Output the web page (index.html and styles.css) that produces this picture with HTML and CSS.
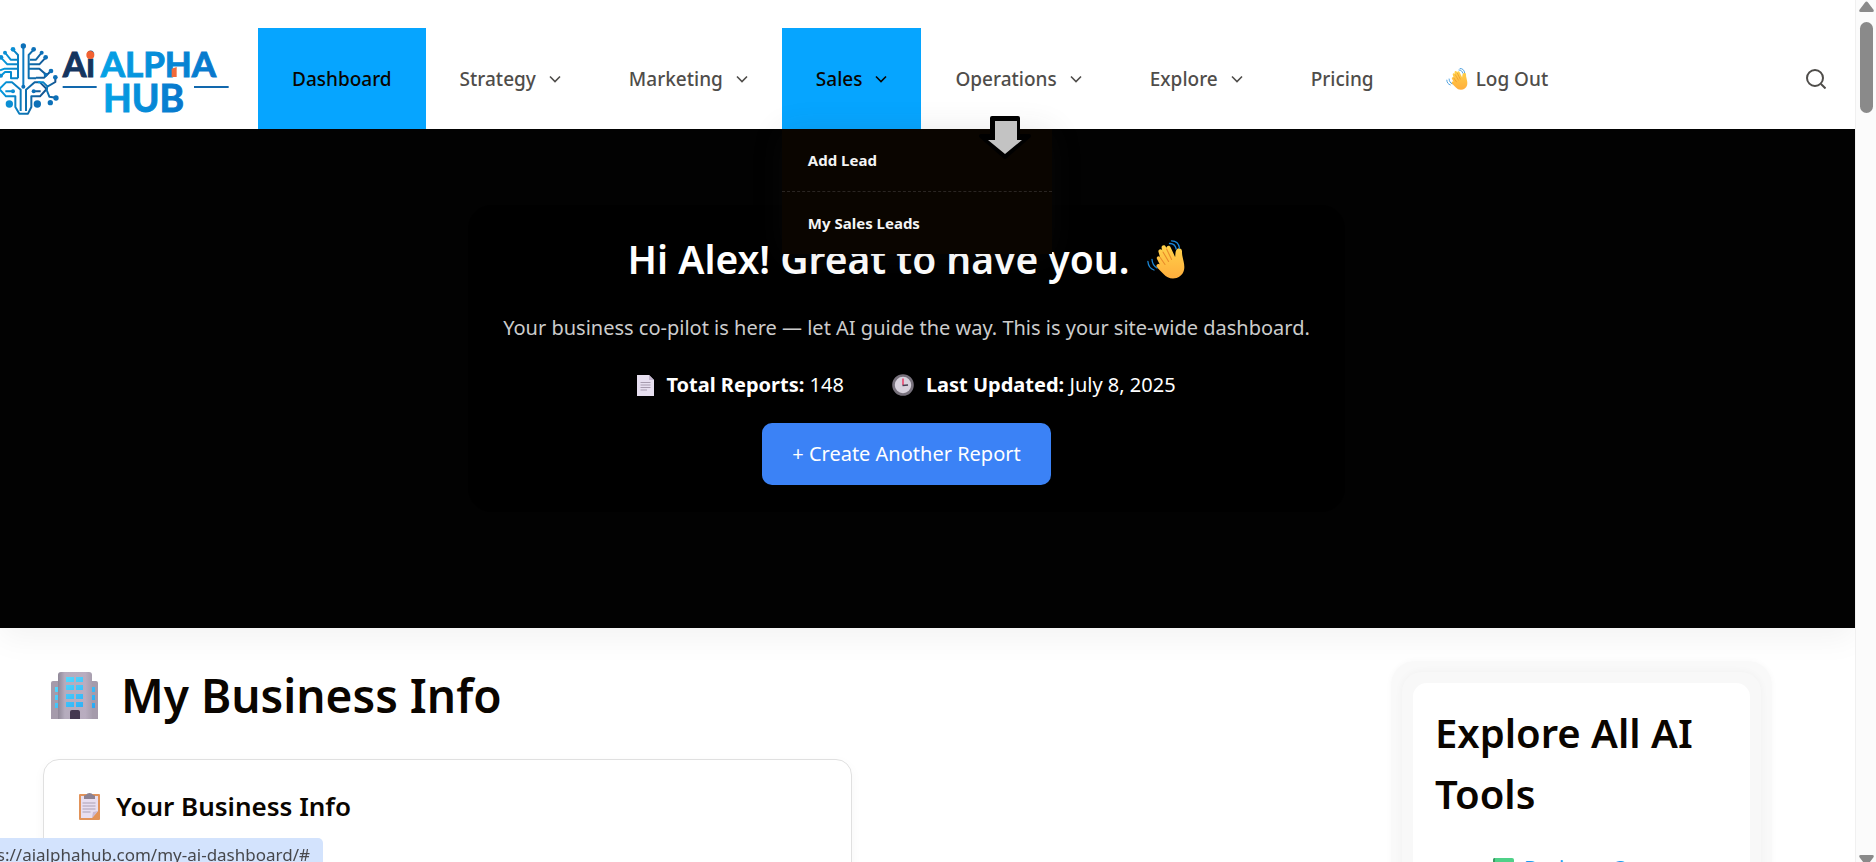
FILE: index.html
```
<!DOCTYPE html>
<html lang="en">
<head>
<meta charset="utf-8">
<meta name="viewport" content="width=device-width, initial-scale=1">
<title>Ai Alpha Hub – My AI Dashboard</title>
<link rel="stylesheet" href="styles.css">
</head>
<body>
<svg class="defs" aria-hidden="true">
  <defs>
    <linearGradient id="skin" x1="0" y1="0" x2="0" y2="1"><stop offset="0" stop-color="#ffd24a"/><stop offset="1" stop-color="#ffae3d"/></linearGradient>
    <linearGradient id="wall" x1="0" y1="0" x2="1" y2="0"><stop offset="0" stop-color="#8f8797"/><stop offset=".2" stop-color="#b5acbd"/><stop offset=".8" stop-color="#b9adc0"/><stop offset="1" stop-color="#a79eae"/></linearGradient>
    <linearGradient id="glass" x1="0" y1="0" x2="1" y2="1"><stop offset="0" stop-color="#5be0ff"/><stop offset="1" stop-color="#26a8f5"/></linearGradient>
    <linearGradient id="brain" x1="0" y1="0" x2="1" y2="0"><stop offset="0" stop-color="#049be0"/><stop offset="1" stop-color="#14508c"/></linearGradient>
    <linearGradient id="brand" x1="0" y1="0" x2="1" y2="0"><stop offset="0" stop-color="#05a3e6"/><stop offset="1" stop-color="#0876cb"/></linearGradient>
    <symbol id="chevron" viewBox="0 0 12 12"><path d="M1 3.500 6 8.500l5-5" fill="none" stroke="currentColor" stroke-width="1.600"/></symbol>
    <symbol id="wave" viewBox="0 0 38 39">
      <path d="M10 19c-1-2 1.500-3.700 3-2L11.500 12c-.8-2.600 2.600-4 3.800-1.600L14.600 8c-.5-2.700 3-3.800 4.200-1.300l.6 1.100c.4-2.600 3.500-2.700 4.300-.4l4.400 9.500c.5-3 .1-5.400 1.600-7.300 1.800-2.200 4.700-1.200 5.200 1.100.3 1.500 0 2.600.4 4.800C36.600 22 38 25.500 37 30c-1.300 5.500-6 8.500-11 8.500-4 0-6.700-1.600-9.500-4.500l-6.200-6.200c-2.200-2.200.2-5 2.500-3.300z" fill="url(#skin)"/>
      <path d="m13.200 17.500 4.800 7M16 12l5.600 9.500M19.600 9l5 10.500" fill="none" stroke="#e98b2b" stroke-width="1.100" stroke-linecap="round"/>
      <path d="M22.500 3.500c3.500-.2 6 2.200 6.700 5.500M24.500.8c4.500 0 7.500 3 8 7.500M5 19.500c.2 4 2 6.700 5 8.500M.9 21.500C1.300 26 3.200 28.800 7 30" fill="none" stroke="#1b87d6" stroke-width="1.300" stroke-linecap="round"/>
    </symbol>
  </defs>
</svg>

<div class="page">
  <header class="header">
    <a class="logo" href="#" aria-label="Ai Alpha Hub">
      <svg viewBox="0 0 696 252" aria-hidden="true">
        <g fill="none" stroke="url(#brain)" stroke-width="6" stroke-linejoin="round">
          <path d="M101 38 86 54v70h22M124 48 108 68H90M137 62 118 82H88M137 112 118 95H88M152 103 132 122H108M54 124V54L39 38M16 48 32 68h20M3 62l19 20h30M0 100l14-5h38M3 116l12-11h18v19h21"/>
          <path d="M62 222v-64L36 136H18L-2 156l20 22h28v32l12 20h26l10-20v-32h26l20-22-20-20H104l-26 22v64M104 163h18M38 163H16"/>
          <path d="M166 121v14l-24 14-2 10 8 20 20 3M114 136h16l12 12"/>
        </g>
        <path d="M67 30h6v118h-6z" fill="#0c7cc4"/>
        <path d="M188 147h102v6H188zM582 147h104v6H582z" fill="#1268ad"/>
        <g fill="#0c70b8">
          <circle cx="70" cy="27" r="8"/><circle cx="70" cy="149" r="6"/><circle cx="101" cy="37" r="7"/><circle cx="125" cy="47" r="6"/><circle cx="137" cy="61" r="7"/><circle cx="137" cy="113" r="6"/><circle cx="153" cy="102" r="7"/><circle cx="101" cy="163" r="6"/><circle cx="112" cy="201" r="11"/><circle cx="166" cy="121" r="7"/><circle cx="168" cy="183" r="8"/><circle cx="151" cy="197" r="8"/>
        </g>
        <g fill="#0a8ed4">
          <circle cx="39" cy="37" r="7"/><circle cx="15" cy="47" r="6"/><circle cx="3" cy="61" r="7"/><circle cx="3" cy="116" r="6"/><circle cx="39" cy="163" r="6"/><circle cx="28" cy="201" r="11"/>
        </g>
        <text class="logo-ai" x="188" y="120">Ai</text>
        <circle cx="271" cy="54" r="12" fill="#f26233"/>
        <text class="logo-alpha" x="302" y="120">ALPHA</text>
        <text class="logo-hub" x="309" y="224">HUB</text>
        <path d="M515 95l15-5v30h-15z" fill="#f26a3a"/>
      </svg>
    </a>
    <nav aria-label="Main">
      <ul class="menu">
        <li><a class="active" href="#">Dashboard</a></li>
        <li><a href="#">Strategy <svg class="chev"><use href="#chevron"/></svg></a></li>
        <li><a href="#">Marketing <svg class="chev"><use href="#chevron"/></svg></a></li>
        <li class="has-sub"><a class="active" href="#">Sales <svg class="chev"><use href="#chevron"/></svg></a>
          <ul class="submenu">
            <li><a href="#">Add Lead</a></li>
            <li><a href="#">My Sales Leads</a></li>
          </ul>
        </li>
        <li><a href="#">Operations <svg class="chev"><use href="#chevron"/></svg></a></li>
        <li><a href="#">Explore <svg class="chev"><use href="#chevron"/></svg></a></li>
        <li><a href="#">Pricing</a></li>
        <li><a class="logout" href="#"><svg class="wave-small"><use href="#wave"/></svg>Log Out</a></li>
      </ul>
    </nav>
    <button class="search" type="button" aria-label="Search">
      <svg viewBox="0 0 20 20"><circle cx="9" cy="9" r="8" fill="none" stroke="currentColor" stroke-width="2"/><path d="m15 15 4.500 4.500" stroke="currentColor" stroke-width="2"/></svg>
    </button>
  </header>

  <section class="hero">
    <div class="hero-card">
      <h2>Hi Alex! Great to have you. <svg class="wave-big"><use href="#wave"/></svg></h2>
      <p class="lead">Your business co-pilot is here — let AI guide the way. This is your site-wide dashboard.</p>
      <div class="stats">
        <p><svg class="doc" viewBox="0 0 17 22"><path d="M0 1h12l5 5v16H0z" fill="#e7dff0"/><path d="M12 1v5h5z" fill="#c4b8d0"/><path d="M3.500 8.500h10M3.500 11h10M3.500 13.500h10M3.500 16h6.500" stroke="#a79caf"/></svg><span><strong>Total Reports:</strong> 148</span></p>
        <p><svg class="clock" viewBox="0 0 22 22"><circle cx="11" cy="11" r="9.500" fill="#d8d2dd" stroke="#77717c" stroke-width="2.600"/><path d="M11 11V4.500" stroke="#ec3c67" stroke-width="1.500"/><path d="M10.500 11.500 16 11" stroke="#463f52" stroke-width="1.600"/></svg><span><strong>Last Updated:</strong> July 8, 2025</span></p>
      </div>
      <a class="cta" href="#">+ Create Another Report</a>
    </div>
  </section>

  <main class="main">
    <div class="content">
      <h1><svg class="building" viewBox="0 0 47 47"><path d="M0 11q0-2 2-2h43q2 0 2 2v36H0z" fill="#a59bab"/><path d="M7 3q0-3 3-3h28q3 0 3 3v44H7z" fill="url(#wall)"/><path fill="url(#glass)" d="M15 5h8v5h-8zM25 5h7v5h-7zM15 13h8v5h-8zM25 13h7v5h-7zM15 22h8v5h-8zM25 22h7v5h-7zM15 30h8v5h-8zM25 30h7v5h-7zM4 15h3v5H4zM4 23h3v5H4zM4 31h3v5H4zM41 15h3v5h-3zM41 23h3v5h-3zM41 31h3v5h-3z"/><path d="M19 47v-7q0-2 2-2h6q2 0 2 2v7z" fill="#453950"/></svg>My Business Info</h1>
      <section class="info-card">
        <h3><svg class="clipboard" viewBox="0 0 21 27"><rect y="1" width="21" height="26" rx="1" fill="#e2935a"/><path d="M2 3h17v15l-6 7H2z" fill="#e8def0"/><path d="m13 25 1-6 5-1z" fill="#c9b8d3"/><path d="M5 6V3q0-1 2-1 1-2 3.500-2T14 2q2 0 2 1v3z" fill="#8c8292"/><path d="M3.500 10h13M3.500 13h13M3.500 16h13M3.500 19h8" stroke="#aba0b4"/></svg>Your Business Info</h3>
      </section>
    </div>
    <aside class="tools">
      <div class="tools-ring">
        <div class="tools-card">
          <h2>Explore All AI Tools</h2>
          <ul>
            <li><svg class="chart" viewBox="0 0 21 21"><rect width="21" height="21" rx="2" fill="#4fd188"/><path d="M0 2q0-2 2-2v21q-2 0-2-2z" fill="#3a9a64"/><path d="m4 15 4-5 4 3 5-7" fill="none" stroke="#fff" stroke-width="2"/></svg><a href="#">Business Canvas</a></li>
          </ul>
        </div>
      </div>
    </aside>
  </main>
</div>

<div class="scrollbar" aria-hidden="true">
  <svg class="arrow" viewBox="0 0 15 11"><path d="M6 1.500q1.500-2 3 0l5.500 7.200q1 2.300-1.300 2.300H1.800Q-.5 11 .5 8.700z"/></svg>
  <div class="track"><div class="thumb"></div></div>
  <svg class="arrow" viewBox="0 0 15 11"><path d="M6 9.500q1.500 2 3 0l5.500-7.200Q15.500 0 13.200 0H1.800Q-.5 0 .5 2.300z"/></svg>
</div>

<svg class="pointer" viewBox="0 0 54 43" aria-hidden="true"><path d="M14 2h26v18h11L27 41 3 20h11z" fill="#000" stroke="#000" stroke-width="4" stroke-linejoin="round"/><path d="M17 5h22v19h5L27 38 10 24h7z" fill="#c3c3c3"/></svg>

<div class="status"><span>https://aialphahub.com/my-ai-dashboard/#</span></div>
</body>
</html>
```
FILE: styles.css
```
* { box-sizing: border-box; }

body {
  margin: 0;
  height: 100vh;
  display: flex;
  overflow: hidden;
  background: #fff;
  color: #0a0500;
  font: 20px/34px "Noto Sans", "Open Sans", sans-serif;
}

h1, h2, h3, p, ul { margin: 0; padding: 0; }
h1, h2, h3 { font-weight: 600; }
ul { list-style: none; }
a { color: inherit; text-decoration: none; }
svg { display: block; flex: none; }
.defs { position: absolute; width: 0; height: 0; }

.page { flex: 1; min-width: 0; overflow: hidden; }

/* Header */
.header {
  position: relative;
  z-index: 2;
  display: flex;
  align-items: center;
  padding: 28px 29px 0 0;
  background: #fff;
}
.logo { width: 258px; }
.logo svg { width: 232px; height: 84px; }
.logo text { font-family: Lato, sans-serif; font-weight: 700; stroke-width: 3; }
.logo-ai { font-size: 102px; fill: #15355f; stroke: #15355f; }
.logo-alpha { font-size: 105px; fill: url(#brand); stroke: url(#brand); }
.logo-hub { font-size: 112px; fill: url(#brand); stroke: url(#brand); }

.menu { display: flex; }
.menu > li { position: relative; }
.menu > li > a {
  display: flex;
  align-items: center;
  gap: 13px;
  height: 101px;
  padding: 0 34px;
  color: #4f4d4a;
  font-size: 19px;
  font-weight: 500;
  white-space: nowrap;
}
.menu > li > a.active { background: #06a5ff; color: #0a0500; }
.menu > li > a.logout { gap: 8px; padding-left: 38px; }
.chev { width: 12px; height: 12px; }
.wave-small { width: 22px; height: 22px; }

.submenu {
  position: absolute;
  top: 100%;
  left: 0;
  width: 270px;
  background: #0a0500;
  box-shadow: 0 2px 30px rgba(60, 60, 60, .12);
}
.submenu a {
  display: flex;
  align-items: center;
  height: 62px;
  padding: 0 26px;
  color: #f4f4f4;
  font-size: 15px;
  font-weight: 700;
}
.submenu li:first-child { border-bottom: 1px dashed #2a2522; }

.search {
  margin-left: auto;
  padding: 0;
  border: 0;
  background: none;
  color: #4f4d4a;
}
.search svg { width: 20px; height: 20px; }

/* Hero */
.hero {
  position: relative;
  padding: 76px 42px 116px 0;
  background: #020202;
  box-shadow: 0 10px 30px rgba(0, 0, 0, .05);
  color: #fff;
}
.hero-card {
  display: flex;
  flex-direction: column;
  align-items: center;
  max-width: 877px;
  margin: 0 auto;
  padding: 29px 24px 27px;
  border-radius: 24px;
  background: #000;
  text-align: center;
}
.hero-card h2 {
  display: flex;
  align-items: center;
  gap: 18px;
  font-size: 39px;
  line-height: 50px;
}
.wave-big { width: 38px; height: 39px; }
.lead { margin-top: 27px; color: #ccc; }
.stats { display: flex; gap: 48px; margin-top: 23px; }
.stats p { display: flex; align-items: center; gap: 12px; }
.doc { width: 17px; height: 22px; }
.clock { width: 22px; height: 22px; }
.cta {
  margin-top: 21px;
  padding: 14px 30px;
  border-radius: 10px;
  background: #3b82f6;
  color: #fff;
}

/* Main */
.main { display: flex; padding: 33px 83px 0 43px; }
.content { flex: 1; padding-top: 5px; }
h1 {
  display: flex;
  align-items: center;
  gap: 23px;
  padding-left: 8px;
  font-size: 46px;
  line-height: 58px;
}
.building { width: 47px; height: 47px; }
.info-card {
  max-width: 809px;
  min-height: 180px;
  margin-top: 35px;
  padding: 26px 35px;
  border: 1px solid #e0e0e0;
  border-radius: 16px;
  box-shadow: 0 4px 12px rgba(0, 0, 0, .04);
}
h3 {
  display: flex;
  align-items: center;
  gap: 16px;
  font-size: 26px;
  line-height: 40px;
}
.clipboard { width: 21px; height: 27px; }

.tools {
  position: relative;
  width: 381px;
  padding: 11px;
  border-radius: 24px;
  background: #f9f9f9;
  box-shadow: 0 0 6px rgba(0, 0, 0, .03);
}
.tools-ring {
  padding: 11px;
  border-radius: 20px;
  background: #f8f8f8;
  box-shadow: 0 0 8px rgba(0, 0, 0, .04);
}
.tools-card {
  min-height: 240px;
  padding: 19px 22px;
  border-radius: 14px;
  background: #fff;
}
.tools-card h2 { font-size: 40px; line-height: 61px; }
.tools-card ul { padding: 27px 0 0 58px; }
.tools-card li { display: flex; align-items: center; gap: 10px; color: #1a9cf0; white-space: nowrap; }
.chart { width: 21px; height: 21px; }

/* Window furniture */
.scrollbar {
  display: flex;
  flex-direction: column;
  align-items: center;
  gap: 10px;
  width: 21px;
  padding-top: 1px;
  border-left: 1px solid #f0f0f0;
  background: #fbfbfb;
}
.arrow { width: 15px; height: 11px; margin-bottom: -4px; fill: #8a8a8a; }
.arrow:first-child { margin-bottom: 0; }
.track { flex: 1; }
.thumb { width: 13px; height: 91px; border-radius: 7px; background: #8a8a8a; }

.pointer { position: absolute; z-index: 3; left: 978px; top: 116px; width: 54px; height: 43px; }

.status {
  position: fixed;
  z-index: 3;
  left: 0;
  bottom: 0;
  display: flex;
  justify-content: flex-end;
  width: 323px;
  height: 24px;
  padding-right: 13px;
  border-radius: 0 5px 0 0;
  overflow: hidden;
  background: #d3e3fd;
  color: #47484c;
  font-size: 17px;
  white-space: nowrap;
}
```
